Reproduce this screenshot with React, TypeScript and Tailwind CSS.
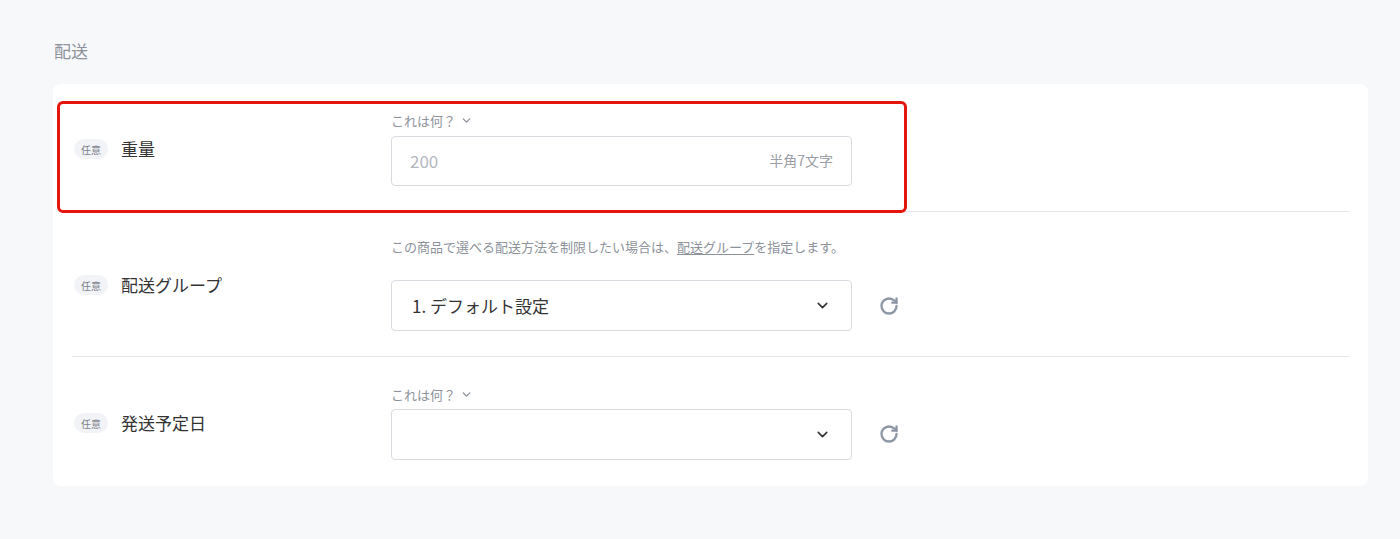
import React from 'react';
import { ChevronDown, RotateCw } from 'lucide-react';

const font = { fontFamily: '"Noto Sans CJK JP", "Noto Sans", sans-serif' };

const Badge = () => (
  <span className="inline-flex items-center justify-center h-[20px] px-[7px] rounded-full bg-[#f2f3f6] text-[10px] text-[#7d828c]">任意</span>
);

const Help = () => (
  <div className="flex items-center gap-1 h-[16px] text-[13px] text-[#8d929b]">
    これは何？ <ChevronDown size={13} strokeWidth={2.5} className="text-[#8d929b]" />
  </div>
);

const Select: React.FC<{ value?: string }> = ({ value }) => (
  <div className="flex items-center gap-[27px]">
    <div className="w-[461px] h-[51px] border border-[#d9dbe0] rounded flex items-center justify-between pl-5 pr-5 text-[17px] text-[#333]">
      <span>{value}</span>
      <ChevronDown size={17} strokeWidth={2.2} className="text-[#333]" />
    </div>
    <RotateCw size={20} strokeWidth={2.8} className="text-[#8d96a5]" />
  </div>
);

const Row: React.FC<{ label: string; cls: string; last?: boolean; children: React.ReactNode }> = ({ label, cls, last, children }) => (
  <div className={`flex items-center ${cls} ${last ? '' : 'border-b border-[#e3e5ea]'}`}>
    <div className="w-[319px] flex items-center gap-[13px] pl-[2px]">
      <Badge />
      <span className="text-[17px] text-[#333]">{label}</span>
    </div>
    <div className="flex flex-col">{children}</div>
  </div>
);

export default function App() {
  return (
    <div style={font} className="w-[1400px] h-[539px] bg-[#f7f8fa] pt-[38px] px-[53px]">
      <div className="text-[17px] text-[#8d929b] pl-[1px] h-[26px]">配送</div>
      <div className="relative mt-[20px] w-[1315px] bg-white rounded-lg px-[19px]">
        <div className="absolute left-[4px] top-[17px] w-[850px] h-[112px] border-[3px] border-[#e3150d] rounded-md pointer-events-none" />
        <Row label="重量" cls="h-[128px] pt-[3px]">
          <Help />
          <div className="mt-[7px] w-[461px] h-[50px] border border-[#d9dbe0] rounded flex items-center justify-between px-[18px]">
            <span className="text-[17px] text-[#b3b7be]">200</span>
            <span className="text-[14px] text-[#9a9ea6]">半角7文字</span>
          </div>
        </Row>
        <Row label="配送グループ" cls="h-[145px] pt-[2px]">
          <div className="h-[16px] text-[13px] text-[#8d929b] flex items-center">
            この商品で選べる配送方法を制限したい場合は、<span className="underline underline-offset-2">配送グループ</span>を指定します。
          </div>
          <div className="mt-[25px]"><Select value="1. デフォルト設定" /></div>
        </Row>
        <Row label="発送予定日" cls="h-[129px] pt-[3px]" last>
          <Help />
          <div className="mt-[6px]"><Select /></div>
        </Row>
      </div>
    </div>
  );
}
